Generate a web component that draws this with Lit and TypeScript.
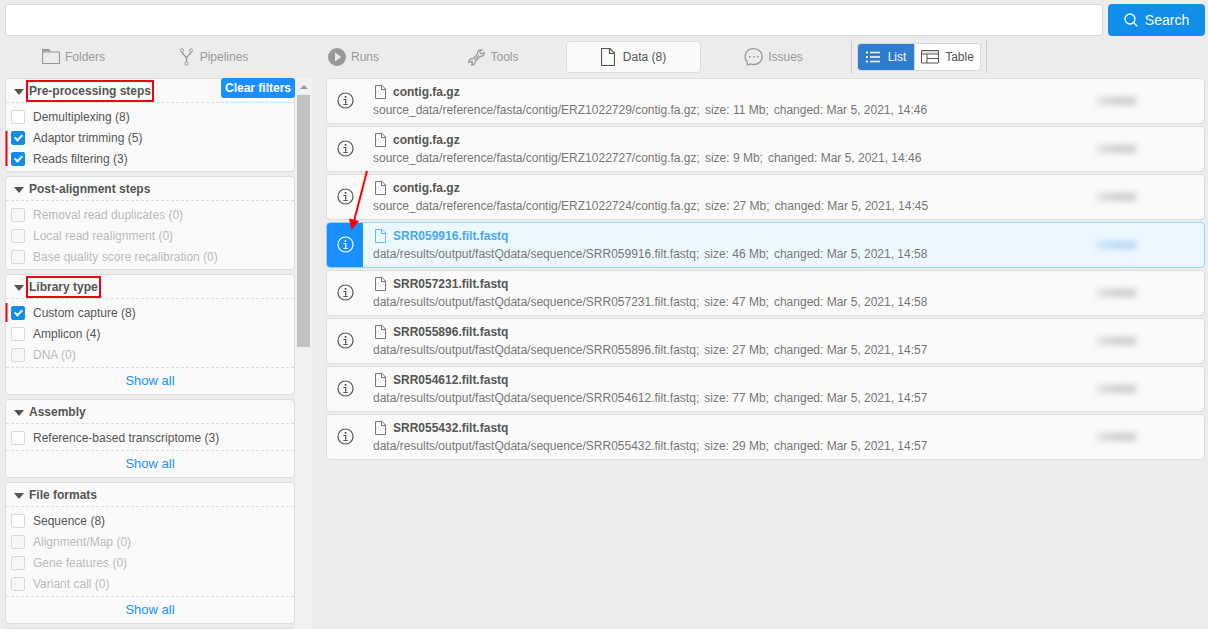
import { LitElement, html, css, svg, nothing } from "lit";
import { customElement, state } from "lit/decorators.js";
import { classMap } from "lit/directives/class-map.js";

interface Option { name: string; count: number; checked?: boolean; }
interface Group { title: string; marked?: boolean; showAll?: boolean; options: Option[]; }
interface DataFile { name: string; path: string; size: string; changed: string; selected?: boolean; }

const GROUPS: Group[] = [
  { title: "Pre-processing steps", marked: true, options: [
    { name: "Demultiplexing", count: 8 },
    { name: "Adaptor trimming", count: 5, checked: true },
    { name: "Reads filtering", count: 3, checked: true } ] },
  { title: "Post-alignment steps", options: [
    { name: "Removal read duplicates", count: 0 },
    { name: "Local read realignment", count: 0 },
    { name: "Base quality score recalibration", count: 0 } ] },
  { title: "Library type", marked: true, showAll: true, options: [
    { name: "Custom capture", count: 8, checked: true },
    { name: "Amplicon", count: 4 },
    { name: "DNA", count: 0 } ] },
  { title: "Assembly", showAll: true, options: [
    { name: "Reference-based transcriptome", count: 3 } ] },
  { title: "File formats", showAll: true, options: [
    { name: "Sequence", count: 8 },
    { name: "Alignment/Map", count: 0 },
    { name: "Gene features", count: 0 },
    { name: "Variant call", count: 0 } ] },
];

const contig = (id: string, size: string, time: string): DataFile => ({
  name: "contig.fa.gz", path: `source_data/reference/fasta/contig/${id}/contig.fa.gz`,
  size, changed: `Mar 5, 2021, ${time}`,
});
const fastq = (id: string, size: string, time: string, selected = false): DataFile => ({
  name: `${id}.filt.fastq`, path: `data/results/output/fastQdata/sequence/${id}.filt.fastq`,
  size, changed: `Mar 5, 2021, ${time}`, selected,
});
const FILES: DataFile[] = [
  contig("ERZ1022729", "11 Mb", "14:46"),
  contig("ERZ1022727", "9 Mb", "14:46"),
  contig("ERZ1022724", "27 Mb", "14:45"),
  fastq("SRR059916", "46 Mb", "14:58", true),
  fastq("SRR057231", "47 Mb", "14:58"),
  fastq("SRR055896", "27 Mb", "14:57"),
  fastq("SRR054612", "77 Mb", "14:57"),
  fastq("SRR055432", "29 Mb", "14:57"),
];

const line = (w: number, h: number, body: unknown) => html`
  <svg class="icon" width=${w} height=${h} viewBox="0 0 ${w} ${h}" fill="none"
    stroke="currentColor" aria-hidden="true">${body}</svg>`;

const icons = {
  folder: line(18, 16, svg`<path d="M.5 3v11.500h17v-11.500zM.5 3V.5h6.500l1.500 2.500" stroke-width="1.200"/><path d="M1 1.500h6.500" stroke-width="1.500"/>`),
  fork: line(16, 18, svg`<circle cx="3" cy="2.500" r="1.600"/><circle cx="12" cy="2.500" r="1.600"/><circle cx="7.500" cy="15.500" r="1.600"/><path d="M3.300 4.300c.2 3.200 4.200 3.200 4.200 6.200v3.300M11.700 4.300c-.2 3.200-4.200 3.200-4.200 6.200" stroke-width="1.500"/>`),
  play: line(18, 18, svg`<circle cx="9" cy="9" r="9" fill="currentColor" stroke="none"/><path d="M7 4.500v9l6.200-4.500z" fill="#ececec" stroke="none"/>`),
  wrench: line(17, 17, svg`<path d="M13.800.9c-2.600-.6-4.800 1.400-4.200 3.900l-4.900 5c-2.300-.5-4.200 1.300-3.900 3.600l1.700-1.100 1.700.4.400 1.700-1.100 1.700c2.300.3 4.200-1.500 3.700-3.800l5-5c2.500.5 4.400-1.600 3.900-3.900l-1.800 1.400-2-.5-.4-1.800z" stroke-width="1.200"/><path d="M6.500 10.600l4.200-4.200" stroke-width="1.300"/><circle cx="3.500" cy="13.500" r=".5"/>`),
  file: line(14, 18, svg`<path d="M.5.500h8.500l4.500 4.500v12.500h-13zM8.500.5v5h5" stroke-width="1.200"/>`),
  smallFile: line(12, 14, svg`<path d="M.5.500h6.500l3.500 3.500v9.500h-10zM6.500.5v4h4" stroke-opacity=".8"/>`),
  chat: line(19, 18, svg`<path d="M3.200 17v-3.200C-1 9 1.500.7 9.700.7c5 0 8.500 3.600 8.500 7.900s-3.500 7.900-8.500 7.900c-1.200 0-2-.2-2.900-.5z" stroke-width="1.300"/><path d="M5 8.800h1.600M9 8.800h1.600M13 8.800h1.600" stroke-width="1.600"/>`),
  list: line(14, 12, svg`<path d="M0 1.500h2M0 6h2M0 10.500h2" stroke-width="2"/><path d="M4 1.500h10M4 6h10M4 10.500h10" stroke-width="1.300"/>`),
  table: line(18, 14, svg`<path d="M.5.500h17v12.500h-17zM.5 4h17M6 4v9M6 8.500h11.500"/><path d="M1 2h16" stroke-opacity=".4"/>`),
  search: line(14, 14, svg`<circle cx="6" cy="6" r="5" stroke-width="1.300"/><path d="M9.700 9.700l3.500 3.600" stroke-width="1.500"/>`),
  info: line(17, 17, svg`<circle cx="8.500" cy="8.500" r="7.500" stroke-width="1.200"/><path d="M6.500 7.500h2.200v4.500M6.500 12.500h4.200" stroke-width="1.200"/><path d="M7.700 4.900h1.600" stroke-width="1.600"/>`),
};

const TABS = [
  { icon: icons.folder, text: "Folders" },
  { icon: icons.fork, text: "Pipelines" },
  { icon: icons.play, text: "Runs" },
  { icon: icons.wrench, text: "Tools" },
  { icon: icons.file, text: "Data (8)", active: true },
  { icon: icons.chat, text: "Issues" },
];

@customElement("filter-group")
export class FilterGroup extends LitElement {
  static properties = { group: { attribute: false } };
  declare group: Group;

  static styles = css`
    :host { display: block; flex: none; background: #fafafa; border: 1px solid #ddd; border-radius: 4px; }
    .head {
      display: flex; align-items: center; gap: 5px; height: 23px; padding-left: 8px; margin: 0;
      border-bottom: 1px dashed #ddd; font-size: 12px; line-height: 16px; font-weight: bold; color: #555;
    }
    .caret { margin-top: 2px; border: 5px solid transparent; border-top: 6px solid #555; border-bottom: 0; }
    .marked { outline: 2px solid #f00010; outline-offset: 1px; }
    .options { padding: 3px 5px 2px; }
    .option { display: flex; align-items: center; gap: 8px; height: 21px; font-size: 12px; color: #555; }
    .off { color: #bbb; }
    input {
      appearance: none; position: relative; width: 14px; height: 14px; margin: 0; background: #fff;
      border: 1px solid #d9d9d9; border-radius: 2px;
    }
    input:disabled { background: #f7f7f7; }
    input:checked { background: #108ee9; border-color: #108ee9; }
    input:checked::after {
      content: ""; position: absolute; left: 4px; top: 1px; width: 3px; height: 6px;
      border: solid #fff; border-width: 0 2px 2px 0; transform: rotate(45deg);
    }
    .all {
      display: block; height: 26px; border-top: 1px dashed #ddd; color: #1890ff;
      font-size: 13px; line-height: 25px; text-align: center; text-decoration: none;
    }
  `;

  render() {
    const g = this.group;
    return html`
      <h3 class="head"><span class="caret"></span><span class=${classMap({ marked: !!g.marked })}>${g.title}</span></h3>
      <div class="options">
        ${g.options.map((o) => html`
          <label class=${classMap({ option: true, off: o.count === 0 })}>
            <input type="checkbox" .checked=${!!o.checked} ?disabled=${o.count === 0} />
            <span>${o.name} (${o.count})</span>
          </label>`)}
      </div>
      ${g.showAll ? html`<a class="all" href="#">Show all</a>` : nothing}
    `;
  }
}

@customElement("file-row")
export class FileRow extends LitElement {
  static properties = { file: { attribute: false } };
  declare file: DataFile;

  static styles = css`
    :host { display: block; }
    .row {
      display: flex; height: 44px; background: #fafafa; border: 1px solid #ddd;
      border-radius: 4px; overflow: hidden; color: #555;
    }
    .info {
      display: flex; align-items: center; justify-content: center; width: 36px; padding: 0 0 1px;
      border: 0; background: none; color: inherit;
    }
    .icon { display: block; flex: none; }
    .text { display: flex; flex-direction: column; gap: 2px; flex: 1; padding: 5px 0 0 10px; }
    .name { display: flex; align-items: center; gap: 6px; padding-left: 2px; font-size: 12px; line-height: 16px; font-weight: bold; }
    .meta { display: flex; gap: 5px; font-size: 12px; line-height: 16px; color: #777; white-space: nowrap; }
    .owner {
      align-self: center; width: 40px; height: 8px; margin-right: 68px; filter: blur(3px);
      background: linear-gradient(90deg, #e4e4e4, #ccc 50%, #ccc);
    }
    .selected { background: #ecf8ff; border-color: #91d5ff; }
    .selected .info { background: #1890ff; color: #fff; }
    .selected .name { color: #49a9ee; }
    .selected .owner { background: linear-gradient(90deg, #d4e6fb, #b9d5f8 50%, #b9d5f8); }
  `;

  render() {
    const f = this.file;
    return html`
      <div class=${classMap({ row: true, selected: !!f.selected })}>
        <button class="info" aria-label="Info">${icons.info}</button>
        <div class="text">
          <div class="name">${icons.smallFile}<span>${f.name}</span></div>
          <div class="meta"><span>${f.path};</span><span>size: ${f.size};</span><span>changed: ${f.changed}</span></div>
        </div>
        <span class="owner"></span>
      </div>`;
  }
}

@customElement("app-root")
export class AppRoot extends LitElement {
  @state() private view = "List";

  static styles = css`
    :host {
      display: flex; flex-direction: column; gap: 5px; position: relative; box-sizing: border-box;
      height: 100vh; padding: 4px 3px 0 5px; overflow: hidden; background: #ececec; color: #555;
      font-family: "Liberation Sans", Arial, sans-serif; font-size: 12px;
    }
    button { font-family: inherit; }
    .icon { display: block; flex: none; }
    .search { display: flex; flex: none; gap: 5px; height: 32px; }
    .query {
      flex: 1; min-width: 0; box-sizing: border-box; padding: 0 8px; border: 1px solid #d9d9d9;
      border-radius: 4px; background: #fff; font: inherit;
    }
    .go {
      display: flex; align-items: center; justify-content: center; gap: 7px; width: 97px; padding: 0;
      border: 0; border-radius: 4px; background: #108ee9; color: #fff; font-size: 14px;
    }
    .bar { display: flex; flex: none; gap: 5px; height: 32px; padding-left: 1px; }
    .tab {
      display: flex; align-items: center; justify-content: center; gap: 5px; width: 135px; padding: 0;
      border: 1px solid transparent; border-radius: 4px; background: none; color: #999; font-size: 12px;
    }
    .tab.active { background: #fafafa; border-color: #ddd; color: #555; gap: 8px; }
    .views { display: flex; align-items: center; margin-left: 5px; padding: 0 5px; border: solid #ccc; border-width: 0 1px; }
    .view {
      display: flex; align-items: center; justify-content: center; gap: 6px; box-sizing: border-box;
      width: 66px; height: 28px; padding: 0; border: 1px solid #d9d9d9; border-left: 0;
      border-radius: 0 4px 4px 0; background: #fff; color: #555; font-size: 12px;
    }
    .view:first-child { width: 58px; gap: 8px; border-left: 1px solid #d9d9d9; border-radius: 4px 0 0 4px; }
    .view.on { background: #2f7dd1; color: #fff; }
    .body { display: flex; flex: 1; min-height: 0; gap: 14px; }
    .side { display: flex; position: relative; flex: none; min-height: 0; }
    .groups { display: flex; flex-direction: column; gap: 4px; width: 290px; overflow: hidden; }
    .more { flex: none; height: 20px; border: 1px solid #ddd; border-radius: 4px; background: #fafafa; }
    .clear {
      position: absolute; top: 0; right: 17px; width: 74px; height: 20px; padding: 0; border: 0;
      border-radius: 3px; background: #1890ff; color: #fff; font-size: 12px; font-weight: bold; white-space: nowrap;
    }
    .track { display: flex; flex-direction: column; align-items: center; width: 17px; background: #f1f1f1; }
    .up { margin: 7px 0 6px; border: 4px solid transparent; border-top: 0; border-bottom-color: #999; }
    .thumb { width: 13px; height: 252px; background: #c1c1c1; }
    .files { display: flex; flex-direction: column; flex: 1; gap: 2px; min-width: 0; }
    .notes { position: absolute; left: 0; top: 0; pointer-events: none; }
  `;

  render() {
    return html`
      <div class="search">
        <input class="query" type="text" aria-label="Search" />
        <button class="go">${icons.search}<span>Search</span></button>
      </div>
      <nav class="bar">
        ${TABS.map((t) => html`
          <button class=${classMap({ tab: true, active: !!t.active })}>${t.icon}<span>${t.text}</span></button>`)}
        <div class="views">
          ${[{ n: "List", i: icons.list }, { n: "Table", i: icons.table }].map((v) => html`
            <button class=${classMap({ view: true, on: this.view === v.n })}
              @click=${() => { this.view = v.n; }}>${v.i}<span>${v.n}</span></button>`)}
        </div>
      </nav>
      <div class="body">
        <aside class="side">
          <div class="groups">
            ${GROUPS.map((g) => html`<filter-group .group=${g}></filter-group>`)}
            <div class="more"></div>
          </div>
          <div class="track"><span class="up"></span><span class="thumb"></span></div>
          <button class="clear">Clear filters</button>
        </aside>
        <main class="files">${FILES.map((f) => html`<file-row .file=${f}></file-row>`)}</main>
      </div>
      <svg class="notes" width="400" height="330" viewBox="0 0 400 330" aria-hidden="true">
        <path d="M6.500 131v35M6.500 303v19" stroke="#f00010" stroke-width="2" />
        <path d="M367 171L354 221" stroke="#f00" stroke-width="2" />
        <path d="M351.500 230l-2.500-11.500 10 2.500z" fill="#f00" />
      </svg>
    `;
  }
}
